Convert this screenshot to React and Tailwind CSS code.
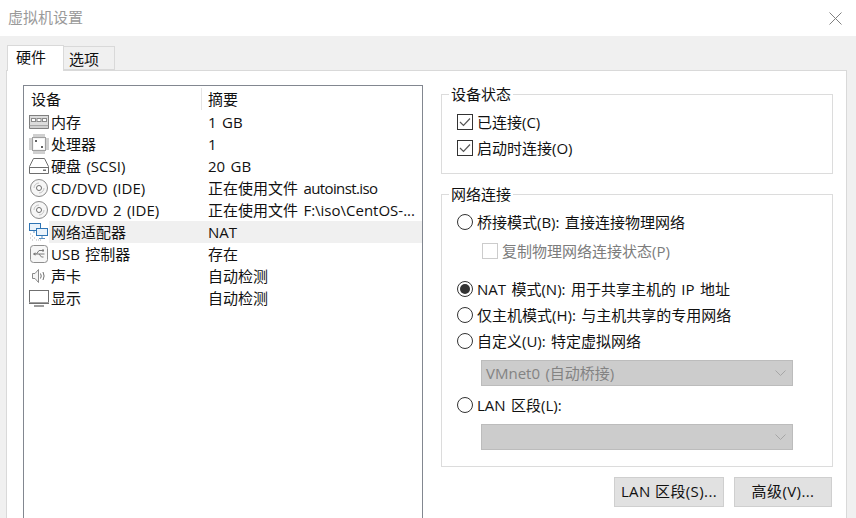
const font = { fontFamily: '"Open Sans", "Noto Sans CJK SC", sans-serif' };

function MemoryIcon() {
  return (
    <svg width="20" height="14" viewBox="0 0 20 14" fill="none">
      <rect x="0.5" y="0.5" width="19" height="10" fill="#dcdcdc" stroke="#808080" />
      <rect x="2.5" y="3.5" width="4" height="3" fill="#fff" stroke="#8a8a8a" />
      <rect x="8" y="3.5" width="4" height="3" fill="#fff" stroke="#8a8a8a" />
      <rect x="13.5" y="3.5" width="4" height="3" fill="#fff" stroke="#8a8a8a" />
      <path d="M0.5 10.5v3h19v-3" fill="#cfcfcf" stroke="#808080" />
    </svg>
  );
}

function CpuIcon() {
  return (
    <svg width="20" height="20" viewBox="0 0 20 20" fill="none">
      <rect x="3.5" y="3.5" width="13" height="13" fill="#f4f4f4" stroke="#a0a0a0" />
      <path d="M5 0v3M7 0v3M9 0v3M11 0v3M13 0v3M15 0v3M5 17v3M7 17v3M9 17v3M11 17v3M13 17v3M15 17v3M0 5h3M0 7h3M0 9h3M0 11h3M0 13h3M0 15h3M17 5h3M17 7h3M17 9h3M17 11h3M17 13h3M17 15h3" stroke="#a0a0a0" />
      <rect x="5" y="5" width="10" height="10" fill="#fff" />
      <rect x="6" y="6" width="2" height="2" fill="#606060" />
      <rect x="12" y="12" width="2" height="2" fill="#606060" />
    </svg>
  );
}

function DiskIcon() {
  return (
    <svg width="20" height="16" viewBox="0 0 20 16" fill="none">
      <path d="M4.5 0.5h11l4 8v7h-19v-7z" fill="#fff" stroke="#6e6e6e" />
      <path d="M0.5 9.5h19" stroke="#6e6e6e" />
      <rect x="14" y="11.5" width="3" height="1.5" fill="#707070" />
    </svg>
  );
}

function DiscIcon() {
  return (
    <svg width="18" height="18" viewBox="0 0 18 18" fill="none">
      <circle cx="9" cy="9" r="8.5" fill="#f6f6f6" stroke="#8a8a8a" />
      <path d="M4 9a5 5 0 0 1 5-5" stroke="#c4c4c4" />
      <path d="M14 9a5 5 0 0 1-5 5" stroke="#c4c4c4" />
      <circle cx="9" cy="9" r="2.5" fill="#fff" stroke="#6e6e6e" />
    </svg>
  );
}

function NetworkIcon() {
  return (
    <svg width="20" height="18" viewBox="0 0 20 18" fill="none">
      <rect x="0.5" y="0.5" width="11" height="7" fill="#eaf3fb" stroke="#2f75b5" />
      <rect x="7.5" y="5.5" width="11" height="7" fill="#eaf3fb" stroke="#2f75b5" />
      <path d="M5 8v2M13 13v2M10 15.5h6" stroke="#5a8fc0" />
      <path d="M1 11h1M3 13h1M1 15h1M3 17h1M5 15h1M7 17h1M9 17h1M11 17h1" stroke="#b0b0b0" />
    </svg>
  );
}

function UsbIcon() {
  return (
    <svg width="18" height="18" viewBox="0 0 18 18" fill="none">
      <rect x="0.5" y="0.5" width="17" height="17" rx="3" fill="#f7f7f7" stroke="#8f8f8f" />
      <path d="M3.5 9h11M6.5 9l2.5-3.5h3M9 9l2.5 3h2" stroke="#7a7a7a" />
      <path d="M3 9l2.5-1.8v3.6z" fill="#7a7a7a" />
      <rect x="12" y="4.5" width="2" height="2" fill="#7a7a7a" />
    </svg>
  );
}

function SpeakerIcon() {
  return (
    <svg width="14" height="14" viewBox="0 0 14 14" fill="none">
      <path d="M0.5 4.5h2.5l3.5-4v13l-3.5-4h-2.5z" fill="#f5f5f5" stroke="#8a8a8a" />
      <path d="M8.5 4.5q1.5 2.5 0 5M11 3q2.2 4 0 8" stroke="#707070" />
    </svg>
  );
}

function MonitorIcon() {
  return (
    <svg width="20" height="17" viewBox="0 0 20 17" fill="none">
      <rect x="0.5" y="0.5" width="19" height="13" fill="#fff" stroke="#707070" />
      <path d="M0 12.5h20" stroke="#a0a0a0" />
      <rect x="5" y="15" width="10" height="2" fill="#9c9c9c" />
    </svg>
  );
}

function Check() {
  return (
    <span className="flex h-[16px] w-[16px] shrink-0 items-center justify-center border border-[#333333] bg-white">
      <svg width="12" height="10" viewBox="0 0 12 10" fill="none">
        <path d="M1 5l3.5 3.5L11 1.5" stroke="#555555" strokeWidth="1.2" />
      </svg>
    </span>
  );
}

function Radio({ checked }) {
  return (
    <span className="flex h-[16px] w-[16px] shrink-0 items-center justify-center rounded-full border border-[#333333] bg-white">
      {checked && <span className="h-[10px] w-[10px] rounded-full bg-[#333333]" />}
    </span>
  );
}

function DisabledSelect({ label }) {
  return (
    <div className="ml-[24px] flex h-[26px] w-[312px] items-center justify-between border border-[#bcbcbc] bg-[#cccccc] pl-[4px] pr-[6px] text-[#838383]">
      <span>{label}</span>
      <svg width="11" height="6" viewBox="0 0 11 6" fill="none">
        <path d="M0.5 0.5l5 5 5-5" stroke="#a6a6a6" />
      </svg>
    </div>
  );
}

const rows = [
  [<MemoryIcon />, '内存', '1 GB'],
  [<CpuIcon />, '处理器', '1'],
  [<DiskIcon />, '硬盘 (SCSI)', '20 GB'],
  [<DiscIcon />, 'CD/DVD (IDE)', <>正在使用文件 <span className="tracking-[-0.6px]">autoinst.iso</span></>],
  [<DiscIcon />, 'CD/DVD 2 (IDE)', '正在使用文件 F:\\iso\\CentOS-...'],
  [<NetworkIcon />, '网络适配器', 'NAT', true],
  [<UsbIcon />, 'USB 控制器', '存在'],
  [<SpeakerIcon />, '声卡', '自动检测'],
  [<MonitorIcon />, '显示', '自动检测'],
];

export default function App() {
  return (
    <div className="flex h-[518px] w-[856px] flex-col overflow-hidden bg-[#f0f0f0] text-[15px] leading-[22px] text-[#111111] [word-spacing:1.5px]" style={font}>
      <div className="flex h-[36px] shrink-0 items-center justify-between bg-white pl-[8px] pr-[14px]">
        <span className="pb-[2px] text-[#9a9a9a]">虚拟机设置</span>
        <svg width="13" height="13" viewBox="0 0 13 13" fill="none">
          <path d="M0.5 0.5l12 12M12.5 0.5l-12 12" stroke="#808080" />
        </svg>
      </div>

      <div className="flex h-[34px] shrink-0 items-end pl-[7px] pt-[9px]">
        <div className="relative z-10 -mb-px flex h-[26px] w-[57px] items-center border border-b-0 border-[#d9d9d9] bg-white pb-[4px] pl-[8px]">硬件</div>
        <div className="flex h-[24px] w-[51px] items-center border border-l-0 border-[#d9d9d9] bg-[#f0f0f0] pl-[5px] pt-[2px]">选项</div>
      </div>

      <div className="ml-[6px] flex min-h-0 w-[841px] flex-1 gap-[18px] border border-b-0 border-[#d9d9d9] bg-white pl-[16px] pt-[14px]">
        <div className="h-[600px] w-[400px] shrink-0 border border-[#828790] bg-white pl-[5px]">
          <div className="flex h-[25px] items-center">
            <span className="w-[173px] border-r border-[#e5e5e5] pl-[2px]">设备</span>
            <span className="pl-[6px]">摘要</span>
          </div>
          {rows.map(([icon, name, summary, selected], i) => (
            <div key={i} className="flex h-[22px] items-center">
              <span className="flex w-[20px] shrink-0 items-center justify-center">{icon}</span>
              <div className={`flex h-[22px] flex-1 items-center pl-[2px] ${selected ? 'bg-[#f0f0f0]' : ''}`}>
                <span className="w-[157px] shrink-0 whitespace-nowrap">{name}</span>
                <span className="whitespace-nowrap">{summary}</span>
              </div>
            </div>
          ))}
        </div>

        <div className="flex w-[392px] shrink-0 flex-col">
          <fieldset className="-mt-[2px] h-[91px] border border-[#dcdcdc] pl-[15px] pt-[4px]">
            <legend className="-ml-[8px] px-[2px]">设备状态</legend>
            <label className="flex h-[26px] items-center gap-[4px]"><Check />已连接(C)</label>
            <label className="flex h-[26px] items-center gap-[4px]"><Check />启动时连接(O)</label>
          </fieldset>

          <fieldset className="mt-[9px] h-[284px] border border-[#dcdcdc] pl-[15px] pt-[4px]">
            <legend className="-ml-[8px] px-[2px]">网络连接</legend>
            <label className="flex h-[26px] items-center gap-[4px]"><Radio />桥接模式(B): 直接连接物理网络</label>
            <label className="ml-[25px] flex h-[32px] items-center gap-[4px] text-[#7c7c7c]">
              <span className="h-[16px] w-[16px] shrink-0 border border-[#cccccc] bg-white" />复制物理网络连接状态(P)
            </label>
            <label className="mt-[9px] flex h-[26px] items-center gap-[4px]"><Radio checked />NAT 模式(N): 用于共享主机的 IP 地址</label>
            <label className="flex h-[26px] items-center gap-[4px]"><Radio />仅主机模式(H): 与主机共享的专用网络</label>
            <label className="flex h-[26px] items-center gap-[4px]"><Radio />自定义(U): 特定虚拟网络</label>
            <div className="mt-[6px]"><DisabledSelect label="VMnet0 (自动桥接)" /></div>
            <label className="mt-[6px] flex h-[26px] items-center gap-[4px]"><Radio />LAN 区段(L):</label>
            <div className="mt-[6px]"><DisabledSelect label="" /></div>
          </fieldset>

          <div className="mt-[10px] flex justify-end gap-[10px] pr-px">
            <button className="h-[30px] w-[110px] border border-[#cfcfcf] bg-[#e1e1e1] pb-[2px] tracking-[0.4px]">LAN 区段(S)...</button>
            <button className="h-[30px] w-[98px] border border-[#cfcfcf] bg-[#e1e1e1] pb-[2px] tracking-[0.4px]">高级(V)...</button>
          </div>
        </div>
      </div>
    </div>
  );
}
